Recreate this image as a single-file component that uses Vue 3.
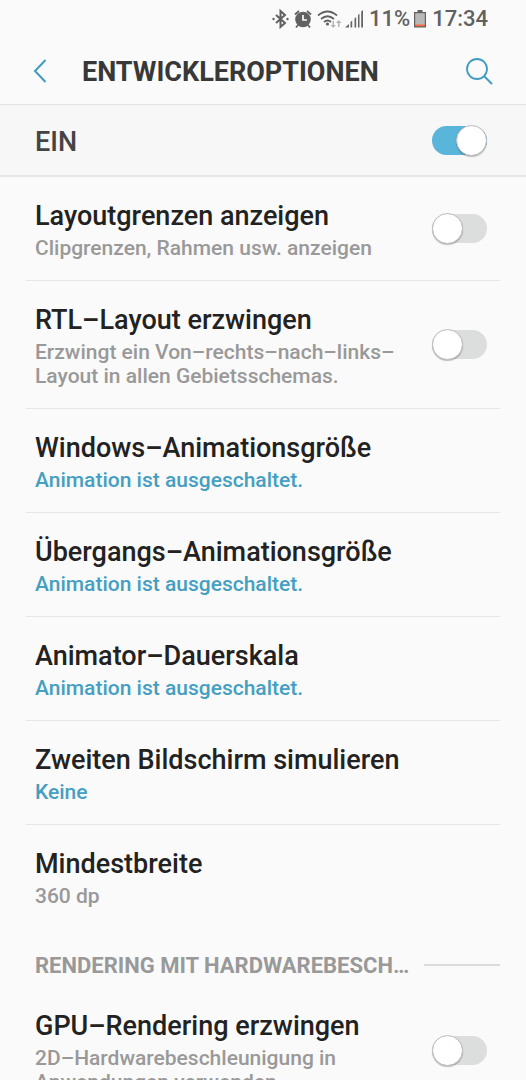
<!--
  App.vue - Entwickleroptionen

  Statusleiste, Kopfzeile, Hauptschalter und Liste der Einstellungen.
  Die Liste scrollt, der obere Bereich bleibt stehen.
-->
<template>
  <div class="screen">
    <!-- Statusleiste -->
    <div class="status-bar">
      <svg class="icon-bluetooth" width="17" height="20" viewBox="0 0 17 20" aria-hidden="true">
        <path d="M4 6l9 8-4.500 4V2L13 6l-9 8" fill="none" stroke="#616161" stroke-width="2" />
        <circle cx="1.500" cy="10" r="1.200" fill="#616161" />
        <circle cx="15.500" cy="10" r="1.200" fill="#616161" />
      </svg>
      <svg class="icon-alarm" width="18" height="20" viewBox="0 0 18 20" aria-hidden="true">
        <circle cx="9" cy="10.500" r="7.800" fill="#616161" />
        <path d="M1 5.500L5 2M17 5.500L13 2M4 16l-2 2.500M14 16l2 2.500" stroke="#616161" stroke-width="1.800" />
        <path d="M9 6v5h4" fill="none" stroke="#fafafa" stroke-width="1.700" />
      </svg>
      <svg class="icon-wifi" width="25" height="20" viewBox="0 0 25 20" aria-hidden="true">
        <g fill="none" stroke="#616161" stroke-width="1.700">
          <path d="M1 6.500q9.500-8 19 0" />
          <path d="M4 10q6.500-5.500 13 0" />
          <path d="M7 13q3.500-3 7 0" />
        </g>
        <circle cx="10.500" cy="15" r="1.600" fill="#616161" />
        <path d="M15.500 12v4h-2l2.800 3 2.700-3h-2v-4zM21 18v-4h-2l2.700-3 2.800 3h-2v4z" fill="#b5b5b5" />
      </svg>
      <svg class="icon-signal" width="18" height="20" viewBox="0 0 18 20" aria-hidden="true">
        <path d="M0 18.500l4-3.500v3.500zM5.500 13l1.700-1.500v7H5.500zM9.500 9.500L11.200 8v10.500H9.500zM13 6l1.500-1.300v13.800H13zM16.200 2.500L18 1v17.500h-1.800z" fill="#666" />
      </svg>
      <span class="battery-level">11%</span>
      <svg class="icon-battery" width="12" height="20" viewBox="0 0 12 20" aria-hidden="true">
        <path d="M3.500 1h5v2H12v15.500H0V3h3.500z" fill="#616161" />
        <path d="M1.200 4.200h9.600V16H1.200z" fill="#b8b8b8" />
        <path d="M1.200 15.500h9.600v1.800H1.200z" fill="#ff6a3c" />
      </svg>
      <span class="clock">17:34</span>
    </div>

    <!-- Kopfzeile -->
    <header class="app-bar">
      <button type="button" class="icon-btn" aria-label="Zurück">
        <svg width="14" height="24" viewBox="0 0 14 24">
          <path d="M12.500 1L2 12l10.500 11" fill="none" stroke="#419cc0" stroke-width="2" />
        </svg>
      </button>
      <h1 class="app-title">ENTWICKLEROPTIONEN</h1>
      <button type="button" class="icon-btn" aria-label="Suchen">
        <svg width="28" height="28" viewBox="0 0 28 28">
          <circle cx="12" cy="12" r="10" fill="none" stroke="#419cc0" stroke-width="1.800" />
          <path d="M19 19l8 8" stroke="#419cc0" stroke-width="2" />
        </svg>
      </button>
    </header>

    <!-- Hauptschalter -->
    <div class="master">
      <label class="master-label" for="master">EIN</label>
      <input id="master" v-model="enabled" class="switch" type="checkbox" role="switch" />
    </div>

    <!-- Einstellungen -->
    <main class="content">
      <section v-for="group in groups" :key="group.id" class="group">
        <div v-if="group.title" class="group-header">
          <h2 class="group-title">{{ group.title }}</h2>
          <span class="group-line"></span>
        </div>
        <div v-for="item in group.items" :key="item.id" class="row">
          <template v-if="item.toggle">
            <label class="row-text" :for="item.id">
              <span class="row-title">{{ item.title }}</span>
              <span class="row-sub">{{ item.sub }}</span>
            </label>
            <input :id="item.id" v-model="item.on" class="switch" type="checkbox" role="switch" />
          </template>
          <button v-else type="button" class="row-text row-button">
            <span class="row-title">{{ item.title }}</span>
            <span class="row-sub" :class="{ accent: item.accent }">{{ item.sub }}</span>
          </button>
        </div>
      </section>
    </main>
  </div>
</template>

<script setup>
import { ref } from 'vue';

const enabled = ref(true);

const groups = ref([
  {
    id: 'drawing',
    items: [
      { id: 'bounds', title: 'Layoutgrenzen anzeigen', sub: 'Clipgrenzen, Rahmen usw. anzeigen', toggle: true, on: false },
      { id: 'rtl', title: 'RTL–Layout erzwingen', sub: 'Erzwingt ein Von–rechts–nach–links–Layout in allen Gebietsschemas.', toggle: true, on: false },
      { id: 'window', title: 'Windows–Animationsgröße', sub: 'Animation ist ausgeschaltet.', accent: true },
      { id: 'transition', title: 'Übergangs–Animationsgröße', sub: 'Animation ist ausgeschaltet.', accent: true },
      { id: 'animator', title: 'Animator–Dauerskala', sub: 'Animation ist ausgeschaltet.', accent: true },
      { id: 'display', title: 'Zweiten Bildschirm simulieren', sub: 'Keine', accent: true },
      { id: 'width', title: 'Mindestbreite', sub: '360 dp' },
    ],
  },
  {
    id: 'rendering',
    title: 'RENDERING MIT HARDWAREBESCHLEUNIGUNG',
    items: [
      { id: 'gpu', title: 'GPU–Rendering erzwingen', sub: '2D–Hardwarebeschleunigung in Anwendungen verwenden', toggle: true, on: false },
    ],
  },
]);
</script>

<style>
body { margin: 0; background: #fafafa; }
</style>

<style scoped>
.screen {
  display: flex;
  flex-direction: column;
  height: 100vh;
  background: #fafafa;
  color: #222;
  font-family: Roboto, "Noto Sans", sans-serif;
}
.status-bar {
  display: flex;
  align-items: center;
  justify-content: flex-end;
  flex: none;
  height: 37px;
  padding-right: 38px;
  font-size: 22px;
  font-weight: 500;
  color: #616161;
}
.icon-bluetooth, .icon-alarm { margin-right: 5px; }
.icon-wifi { margin-right: 3px; }
.icon-signal { margin-right: 6px; }
.battery-level { margin-right: 4px; }
.icon-battery { margin-right: 6px; }
.app-bar {
  display: flex;
  align-items: center;
  flex: none;
  height: 67px;
  padding: 0 33px;
  border-bottom: 1px solid #e2e2e2;
}
.icon-btn {
  display: flex;
  padding: 0;
  border: none;
  background: none;
  cursor: pointer;
}
.app-title {
  flex: 1;
  margin: 0 0 0 35px;
  padding-top: 2px;
  font-size: 27px;
  line-height: 32px;
  font-weight: 700;
  color: #383838;
}
.master {
  display: flex;
  align-items: center;
  justify-content: space-between;
  flex: none;
  height: 70px;
  padding: 0 39px 0 35px;
  border-bottom: 2px solid #e6e6e6;
  background: #f7f7f7;
}
.master-label {
  padding-top: 3px;
  font-size: 27px;
  line-height: 32px;
  font-weight: 500;
  color: #444;
}
.content {
  flex: 1;
  min-height: 0;
  padding: 0 26px;
  overflow-y: auto;
  scrollbar-width: none;
}
.row {
  display: flex;
  align-items: center;
  padding-right: 13px;
  border-bottom: 1px solid #e6e6e6;
}
.row:last-child { border-bottom: none; }
.row-text {
  display: flex;
  flex: 1;
  flex-direction: column;
  gap: 4px;
  min-width: 0;
  padding: 23px 32px 20px 9px;
}
.row-button {
  border: none;
  background: none;
  font-family: inherit;
  text-align: left;
  cursor: pointer;
}
.row-title {
  font-size: 27px;
  line-height: 32px;
  font-weight: 500;
  color: #222;
}
.row-sub {
  font-size: 21px;
  line-height: 24px;
  font-weight: 500;
  color: #999;
}
.row-sub.accent { color: #459fc2; }
.group-header {
  display: flex;
  align-items: center;
  gap: 8px;
  padding: 23px 0 8px 9px;
}
.group-title {
  flex: 1;
  min-width: 0;
  margin: 0;
  padding-top: 2px;
  overflow: hidden;
  font-size: 22px;
  line-height: 26px;
  font-weight: 700;
  color: #999;
  text-overflow: ellipsis;
  white-space: nowrap;
}
.group-line { flex: none; width: 76px; height: 2px; background: #dcdcdc; }
.switch {
  display: flex;
  align-items: center;
  flex: none;
  width: 55px;
  height: 29px;
  margin: 0;
  border-radius: 15px;
  background: #dcdedd;
  appearance: none;
  cursor: pointer;
}
.switch::before {
  content: "";
  box-sizing: border-box;
  flex: none;
  width: 31px;
  height: 31px;
  border: 1px solid #bdbdbd;
  border-radius: 50%;
  background: #fff;
  box-shadow: 0 1px 1px rgba(0,0,0,0.25);
}
.switch:checked { justify-content: flex-end; background: #59b5da; }
</style>
